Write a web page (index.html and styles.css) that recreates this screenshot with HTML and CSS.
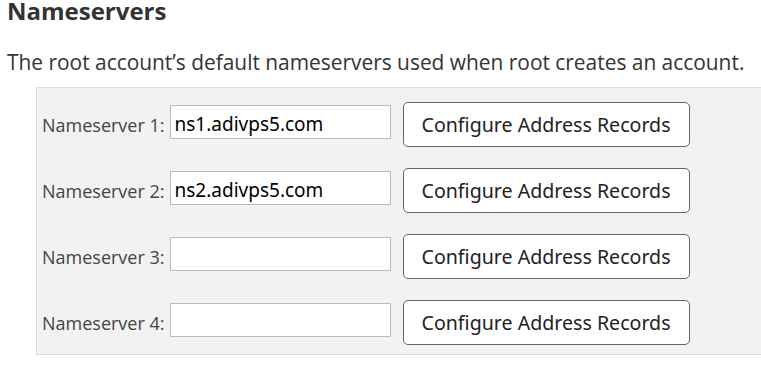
FILE: index.html
```html
<!DOCTYPE html>
<html lang="en">
<head>
  <meta charset="UTF-8">
  <title>Nameservers</title>
  <link rel="stylesheet" href="styles.css">
</head>
<body>

  <div class="section">
    <h2>Nameservers</h2>
    <p class="desc">The root account&rsquo;s default nameservers used when root creates an account.</p>

    <div class="ns-box">
      <div class="ns-row">
        <label for="ns1">Nameserver 1:</label>
        <input type="text" id="ns1" value="ns1.adivps5.com">
        <button type="button">Configure Address Records</button>
      </div>
      <div class="ns-row">
        <label for="ns2">Nameserver 2:</label>
        <input type="text" id="ns2" value="ns2.adivps5.com">
        <button type="button">Configure Address Records</button>
      </div>
      <div class="ns-row">
        <label for="ns3">Nameserver 3:</label>
        <input type="text" id="ns3" value="">
        <button type="button">Configure Address Records</button>
      </div>
      <div class="ns-row">
        <label for="ns4">Nameserver 4:</label>
        <input type="text" id="ns4" value="">
        <button type="button">Configure Address Records</button>
      </div>
    </div>
  </div>

</body>
</html>
```

FILE: styles.css
```css
body {
  margin: 0;
  background: #fff;
  font-family: 'Open Sans', sans-serif;
  color: #333;
  overflow: hidden;
}

.section {
  padding: 0 0 0 7px;
}

h2 {
  font-size: 24px;
  font-weight: bold;
  margin: -5px 0 0;
  line-height: 32px;
}

.desc {
  font-size: 20.9px;
  margin: 21px 0 0;
  line-height: 28px;
}

.ns-box {
  margin: 11px 0 0 29px;
  width: 760px;
  background-color: #f2f2f2;
  border: 1px solid #ddd;
  padding: 14px 0 9px 5px;
  display: flex;
  flex-direction: column;
  gap: 21px;
}

.ns-row {
  display: flex;
  align-items: center;
}

.ns-row label {
  font-size: 18px;
  color: #444;
  margin-right: 5px;
}

.ns-row input {
  width: 221px;
  height: 34px;
  box-sizing: border-box;
  margin-bottom: 5px;
  border: 1px solid #bbb;
  padding: 4px 4px 0;
  font-family: 'Noto Sans', sans-serif;
  font-size: 19px;
  color: #000;
  background: #fff;
}

.ns-row button {
  width: 287px;
  height: 45px;
  margin-left: 12px;
  background: #fff;
  border: 1px solid #666;
  border-radius: 5px;
  font-family: 'Noto Sans', sans-serif;
  font-size: 19.6px;
  color: #222;
}
```
